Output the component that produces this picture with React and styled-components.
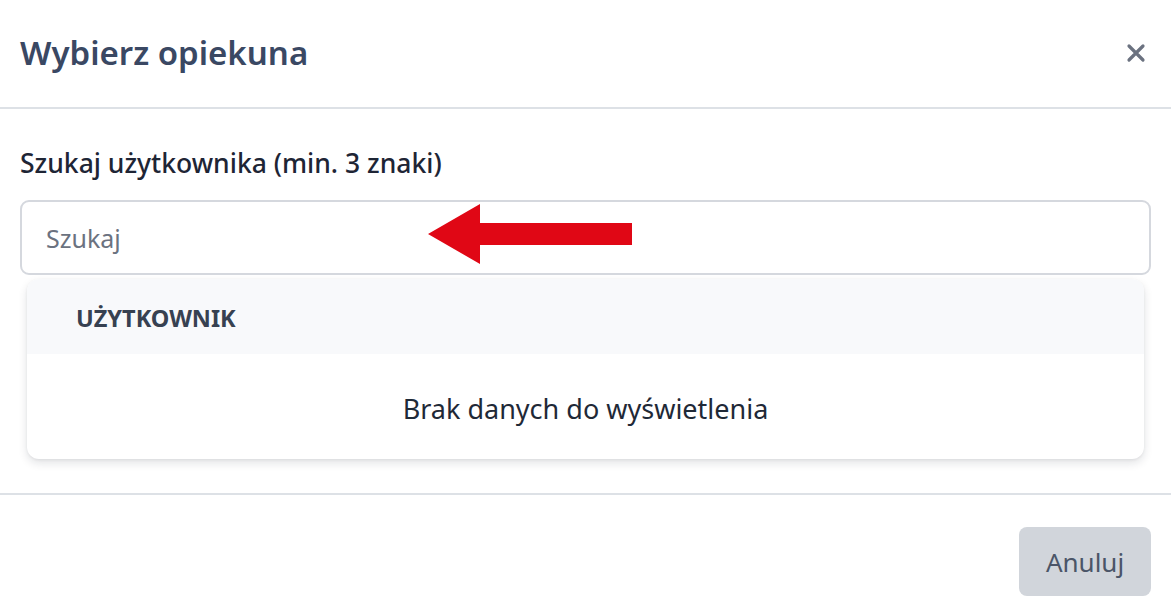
import React from "react";
import styled, { createGlobalStyle } from "styled-components";

const Global = createGlobalStyle`
  html, body { margin: 0; padding: 0; background: #ffffff; }
  body { font-family: "Noto Sans", "Open Sans", sans-serif; }
  * { box-sizing: border-box; }
`;

const Modal = styled.div`
  width: 1171px;
  height: 608px;
  background: #fff;
  display: flex;
  flex-direction: column;
  overflow: hidden;
`;

const Header = styled.header`
  height: 109px;
  flex-shrink: 0;
  display: flex;
  align-items: center;
  justify-content: space-between;
  padding: 0 24px 2px 20px;
  border-bottom: 2px solid #dde1e6;
`;

const Title = styled.h1`
  margin: 0;
  font-size: 33px;
  font-weight: 600;
  color: #3a4863;
`;

const CloseButton = styled.button`
  border: 0;
  background: none;
  padding: 0;
  width: 22px;
  height: 22px;
  display: flex;
  align-items: center;
  justify-content: center;
  color: #6b7280;
  cursor: pointer;
`;

const Body = styled.section`
  padding: 36px 20px 34px 20px;
  border-bottom: 2px solid #dde1e6;
  display: flex;
  flex-direction: column;
`;

const Label = styled.label`
  font-size: 26.5px;
  font-weight: 500;
  color: #1e2535;
  line-height: 36px;
  margin-bottom: 19px;
`;

const InputWrap = styled.div`
  position: relative;
`;

const Input = styled.input`
  display: block;
  width: 100%;
  height: 75px;
  border: 2px solid #d5d8de;
  border-radius: 9px;
  padding: 0 24px;
  font-family: inherit;
  font-size: 25px;
  color: #1f2937;
  outline: none;
  &::placeholder { color: #6b7280; }
`;

const Arrow = styled.svg`
  position: absolute;
  left: 408px;
  top: 4px;
  pointer-events: none;
`;

const Card = styled.div`
  margin: 4px 7px 0 7px;
  border-radius: 12px;
  box-shadow: 0 4px 10px rgba(17, 24, 39, 0.12), 0 1px 3px rgba(17, 24, 39, 0.06);
  overflow: hidden;
  background: #fff;
`;

const HeadRow = styled.div`
  height: 75px;
  background: #f8f9fb;
  display: flex;
  align-items: center;
  padding: 2px 0 0 49px;
  font-size: 23.5px;
  font-weight: 700;
  color: #374151;
`;

const EmptyRow = styled.div`
  height: 105px;
  display: flex;
  align-items: center;
  justify-content: center;
  font-size: 27px;
  color: #1f2937;
  padding-top: 4px;
`;

const Footer = styled.footer`
  display: flex;
  justify-content: flex-end;
  padding: 32px 20px 0 20px;
`;

const CancelButton = styled.button`
  height: 69px;
  width: 132px;
  border: 0;
  border-radius: 8px;
  background: #d1d5db;
  color: #4b5568;
  font-family: inherit;
  font-size: 26px;
  cursor: pointer;
`;

export default function App() {
  return (
    <>
      <Global />
      <Modal>
        <Header>
          <Title>Wybierz opiekuna</Title>
          <CloseButton aria-label="Zamknij">
            <svg width="20" height="20" viewBox="0 0 20 20">
              <path d="M3 3 L17 17 M17 3 L3 17" stroke="currentColor" strokeWidth="3.2" strokeLinecap="round" />
            </svg>
          </CloseButton>
        </Header>
        <Body>
          <Label>Szukaj użytkownika (min. 3 znaki)</Label>
          <InputWrap>
            <Input placeholder="Szukaj" />
            <Arrow width="204" height="60" viewBox="0 0 204 60">
              <polygon points="0,30 52,0 52,19 204,19 204,41 52,41 52,60" fill="#e00715" />
            </Arrow>
          </InputWrap>
          <Card>
            <HeadRow>UŻYTKOWNIK</HeadRow>
            <EmptyRow>Brak danych do wyświetlenia</EmptyRow>
          </Card>
        </Body>
        <Footer>
          <CancelButton>Anuluj</CancelButton>
        </Footer>
      </Modal>
    </>
  );
}
